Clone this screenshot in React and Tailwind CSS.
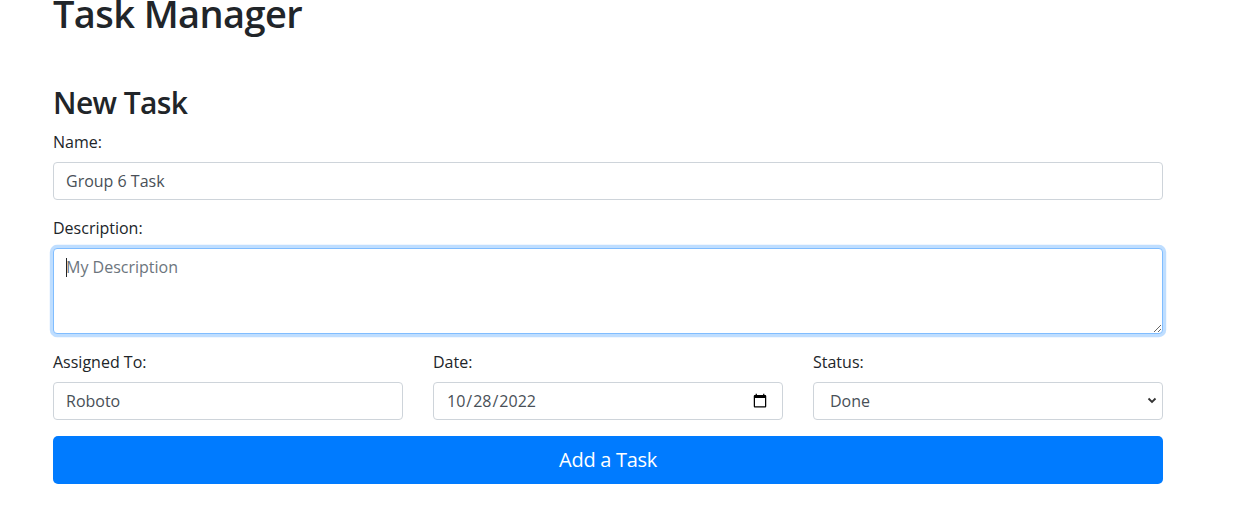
import { useState } from 'react';

const font = { fontFamily: '"Open Sans", "Noto Sans", "Liberation Sans", sans-serif' };

function Label({ children }) {
  return <label className="block mb-2 text-base leading-6 text-[#212529]">{children}</label>;
}

const inputCls =
  'block w-full h-[38px] px-3 py-1.5 text-base leading-6 text-[#495057] bg-white border border-[#ced4da] rounded outline-none';

export default function App() {
  const [name, setName] = useState('Group 6 Task');
  const [desc, setDesc] = useState('');
  const [assigned, setAssigned] = useState('Roboto');
  const [date, setDate] = useState('2022-10-28');
  const [status, setStatus] = useState('Done');

  return (
    <div className="min-h-screen bg-white text-[#212529]" style={font}>
      <div className="w-[1110px] ml-[53px] -mt-[11px]">
        <h1 className="text-[38px] leading-[48px] font-semibold tracking-[-0.6px] mb-2">Task Manager</h1>
        <h2 className="mt-[47px] text-[30px] leading-[38px] font-semibold tracking-[-0.6px] mb-2">New Task</h2>
        <form onSubmit={(e) => e.preventDefault()}>
          <div className="mb-4">
            <Label>Name:</Label>
            <input className={inputCls} value={name} onChange={(e) => setName(e.target.value)} />
          </div>
          <div className="mb-4">
            <Label>Description:</Label>
            <div className="relative">
              <textarea
                rows={3}
                className="block w-full h-[86px] px-3 py-1.5 text-base leading-6 text-[#495057] bg-white border border-[#80bdff] rounded outline-none shadow-[0_0_0_3.2px_rgba(0,123,255,0.25)] placeholder:text-[#6c757d]"
                placeholder="My Description"
                value={desc}
                onChange={(e) => setDesc(e.target.value)}
              />
              <span className="absolute left-[13px] top-[10px] w-px h-[19px] bg-[#212529]" />
            </div>
          </div>
          <div className="grid grid-cols-3 gap-x-[30px] mb-4">
            <div>
              <Label>Assigned To:</Label>
              <input className={inputCls} value={assigned} onChange={(e) => setAssigned(e.target.value)} />
            </div>
            <div>
              <Label>Date:</Label>
              <input type="date" className={inputCls} value={date} onChange={(e) => setDate(e.target.value)} />
            </div>
            <div>
              <Label>Status:</Label>
              <div className="relative">
                <select
                  className={inputCls + ' appearance-none pl-4'}
                  value={status}
                  onChange={(e) => setStatus(e.target.value)}
                >
                  <option>To Do</option>
                  <option>In Progress</option>
                  <option>Done</option>
                </select>
                <svg className="absolute right-[6px] top-[15px] pointer-events-none" width="10" height="7" viewBox="0 0 10 7">
                  <path d="M1.5 1.5 L5 5 L8.5 1.5" fill="none" stroke="#333" strokeWidth="1.8" />
                </svg>
              </div>
            </div>
          </div>
          <button
            type="submit"
            className="block w-full h-12 px-4 py-2 text-xl leading-[30px] tracking-[-0.3px] text-white bg-[#007bff] rounded-[5px]"
          >
            Add a Task
          </button>
        </form>
      </div>
    </div>
  );
}
